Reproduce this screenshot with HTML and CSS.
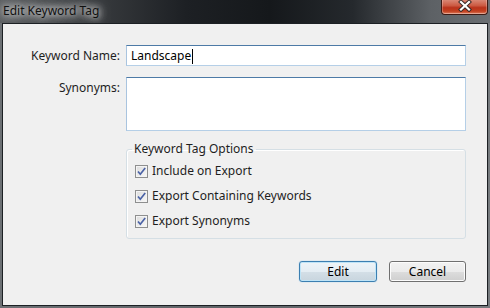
FILE: index.html
```html
<!DOCTYPE html>
<html lang="en">
<head>
  <meta charset="UTF-8" />
  <title>Edit Keyword Tag</title>
  <link rel="stylesheet" href="styles.css">
</head>
<body>
  <div class="window">
    <div class="titlebar">
      <span class="title">Edit Keyword Tag</span>
      <div class="close">
        <svg width="16" height="12" viewBox="0 0 16 12">
          <path d="M4 2 L12 9.5 M12 2 L4 9.5" stroke="#3a2a28" stroke-width="4.2" stroke-linecap="square" fill="none"/>
          <path d="M4 2 L12 9.5 M12 2 L4 9.5" stroke="#fff" stroke-width="2.2" stroke-linecap="square" fill="none"/>
        </svg>
      </div>
    </div>

    <div class="client">
      <div class="form">
        <label class="label">Keyword Name:</label>
        <div class="field input focused">Landscape<span class="caret"></span></div>
        <label class="label top">Synonyms:</label>
        <div class="field textarea"></div>
      </div>

      <fieldset class="group">
        <legend>Keyword Tag Options</legend>
        <label class="check"><span class="box"><svg width="13" height="13" viewBox="0 0 13 13"><path d="M3 6.5 L5.3 9.2 L10.2 3" stroke="#4a62a6" stroke-width="1.7" fill="none"/></svg></span>Include on Export</label>
        <label class="check"><span class="box"><svg width="13" height="13" viewBox="0 0 13 13"><path d="M3 6.5 L5.3 9.2 L10.2 3" stroke="#4a62a6" stroke-width="1.7" fill="none"/></svg></span>Export Containing Keywords</label>
        <label class="check"><span class="box"><svg width="13" height="13" viewBox="0 0 13 13"><path d="M3 6.5 L5.3 9.2 L10.2 3" stroke="#4a62a6" stroke-width="1.7" fill="none"/></svg></span>Export Synonyms</label>
      </fieldset>

      <div class="buttons">
        <button class="btn default">Edit</button>
        <button class="btn">Cancel</button>
      </div>
    </div>
  </div>
</body>
</html>
```

FILE: styles.css
```css
body {
  margin: 0;
  font-family: 'Noto Sans', 'DejaVu Sans', sans-serif;
  font-size: 12px;
  color: #000;
}
.window {
  width: 490px;
  height: 308px;
  display: flex;
  flex-direction: column;
  background: linear-gradient(90deg, #6c7074 0%, #5f6367 50%, #777b7f 100%);
  overflow: hidden;
}
.titlebar {
  height: 23px;
  flex: none;
  display: flex;
  align-items: flex-start;
  justify-content: space-between;
  background: linear-gradient(90deg, #5b5e61 0%, #3a3d40 18%, #1d2024 38%, #15181b 55%, #25292d 72%, #5d6165 88%, #6b6f73 100%);
}
.title {
  padding: 3px 0 0 3px;
  line-height: 16px;
  color: #101010;
  text-shadow: 0 0 6px #e8e8e8, 0 0 10px #dcdcdc, 0 0 14px #c8c8c8;
}
.close {
  width: 45px;
  height: 14px;
  margin-right: 2px;
  border: 1px solid #3d1a14;
  border-top: none;
  border-radius: 0 0 4px 4px;
  background: linear-gradient(#d98674 0%, #cc5a42 40%, #b9321b 55%, #c2401f 80%, #de7d5e 100%);
  box-shadow: inset 0 -1px 0 rgba(255, 255, 255, 0.35), inset 1px 0 0 rgba(255, 255, 255, 0.25), inset -1px 0 0 rgba(255, 255, 255, 0.25);
  display: flex;
  justify-content: center;
  align-items: flex-start;
}
.client {
  flex: 1;
  margin: 0 2px 2px 2px;
  border: 1px solid #1c2024;
  background: #f0f0f0;
  display: flex;
  flex-direction: column;
}
.form {
  display: grid;
  grid-template-columns: 117px 340px;
  grid-template-rows: 21px 54px;
  column-gap: 6px;
  row-gap: 11px;
  padding-top: 21px;
}
.label {
  text-align: right;
  align-self: center;
  line-height: 16px;
  color: #1e1e1e;
}
.label.top {
  align-self: start;
  padding-top: 3px;
}
.field {
  box-sizing: border-box;
  background: #fff;
  border: 1px solid #b5cfe7;
  border-top-color: #4d7aa6;
  border-left-color: #a9c4df;
}
.input {
  padding: 1px 0 0 4px;
  line-height: 18px;
  display: flex;
  align-items: center;
}
.caret {
  display: inline-block;
  width: 1px;
  height: 15px;
  margin-left: 1px;
  background: #000;
}
.group {
  margin: 10px 0 0 123px;
  width: 340px;
  box-sizing: border-box;
  border: 1px solid #d5dfe5;
  border-radius: 3px;
  box-shadow: inset 1px 1px 0 #fff;
  padding: 6px 0 9px 8px;
  display: flex;
  flex-direction: column;
  gap: 9px;
}
.group legend {
  padding: 0 2px;
  margin-left: -3px;
  line-height: 16px;
  color: #1e1e1e;
}
.check {
  display: flex;
  align-items: center;
  gap: 4px;
  line-height: 16px;
  color: #1e1e1e;
}
.box {
  width: 13px;
  height: 13px;
  box-sizing: border-box;
  border: 1px solid #8e8f8f;
  background: linear-gradient(135deg, #dcdcdc, #f8f8f8);
  box-shadow: inset 0 0 0 1px #f4f4f4;
  position: relative;
  flex: none;
}
.box svg {
  position: absolute;
  left: -1px;
  top: -1px;
}
.buttons {
  display: flex;
  justify-content: flex-end;
  gap: 12px;
  margin-top: 22px;
  padding-right: 21px;
}
.btn {
  height: 21px;
  width: 77px;
  font-family: inherit;
  font-size: 12px;
  color: #000;
  border: 1px solid #707070;
  border-radius: 3px;
  background: linear-gradient(#f2f2f2 0%, #ebebeb 50%, #dddddd 51%, #cfcfcf 100%);
  box-shadow: inset 0 0 0 1px #fcfcfc;
  padding: 0;
}
.btn.default {
  width: 78px;
  border-color: #3c7fb1;
  background: linear-gradient(#eef4f8 0%, #e4edf3 50%, #d4dfe7 51%, #c8d5de 100%);
  box-shadow: inset 0 0 0 1px #bfe4f7, 0 0 1px #5fb3e8;
}
```
